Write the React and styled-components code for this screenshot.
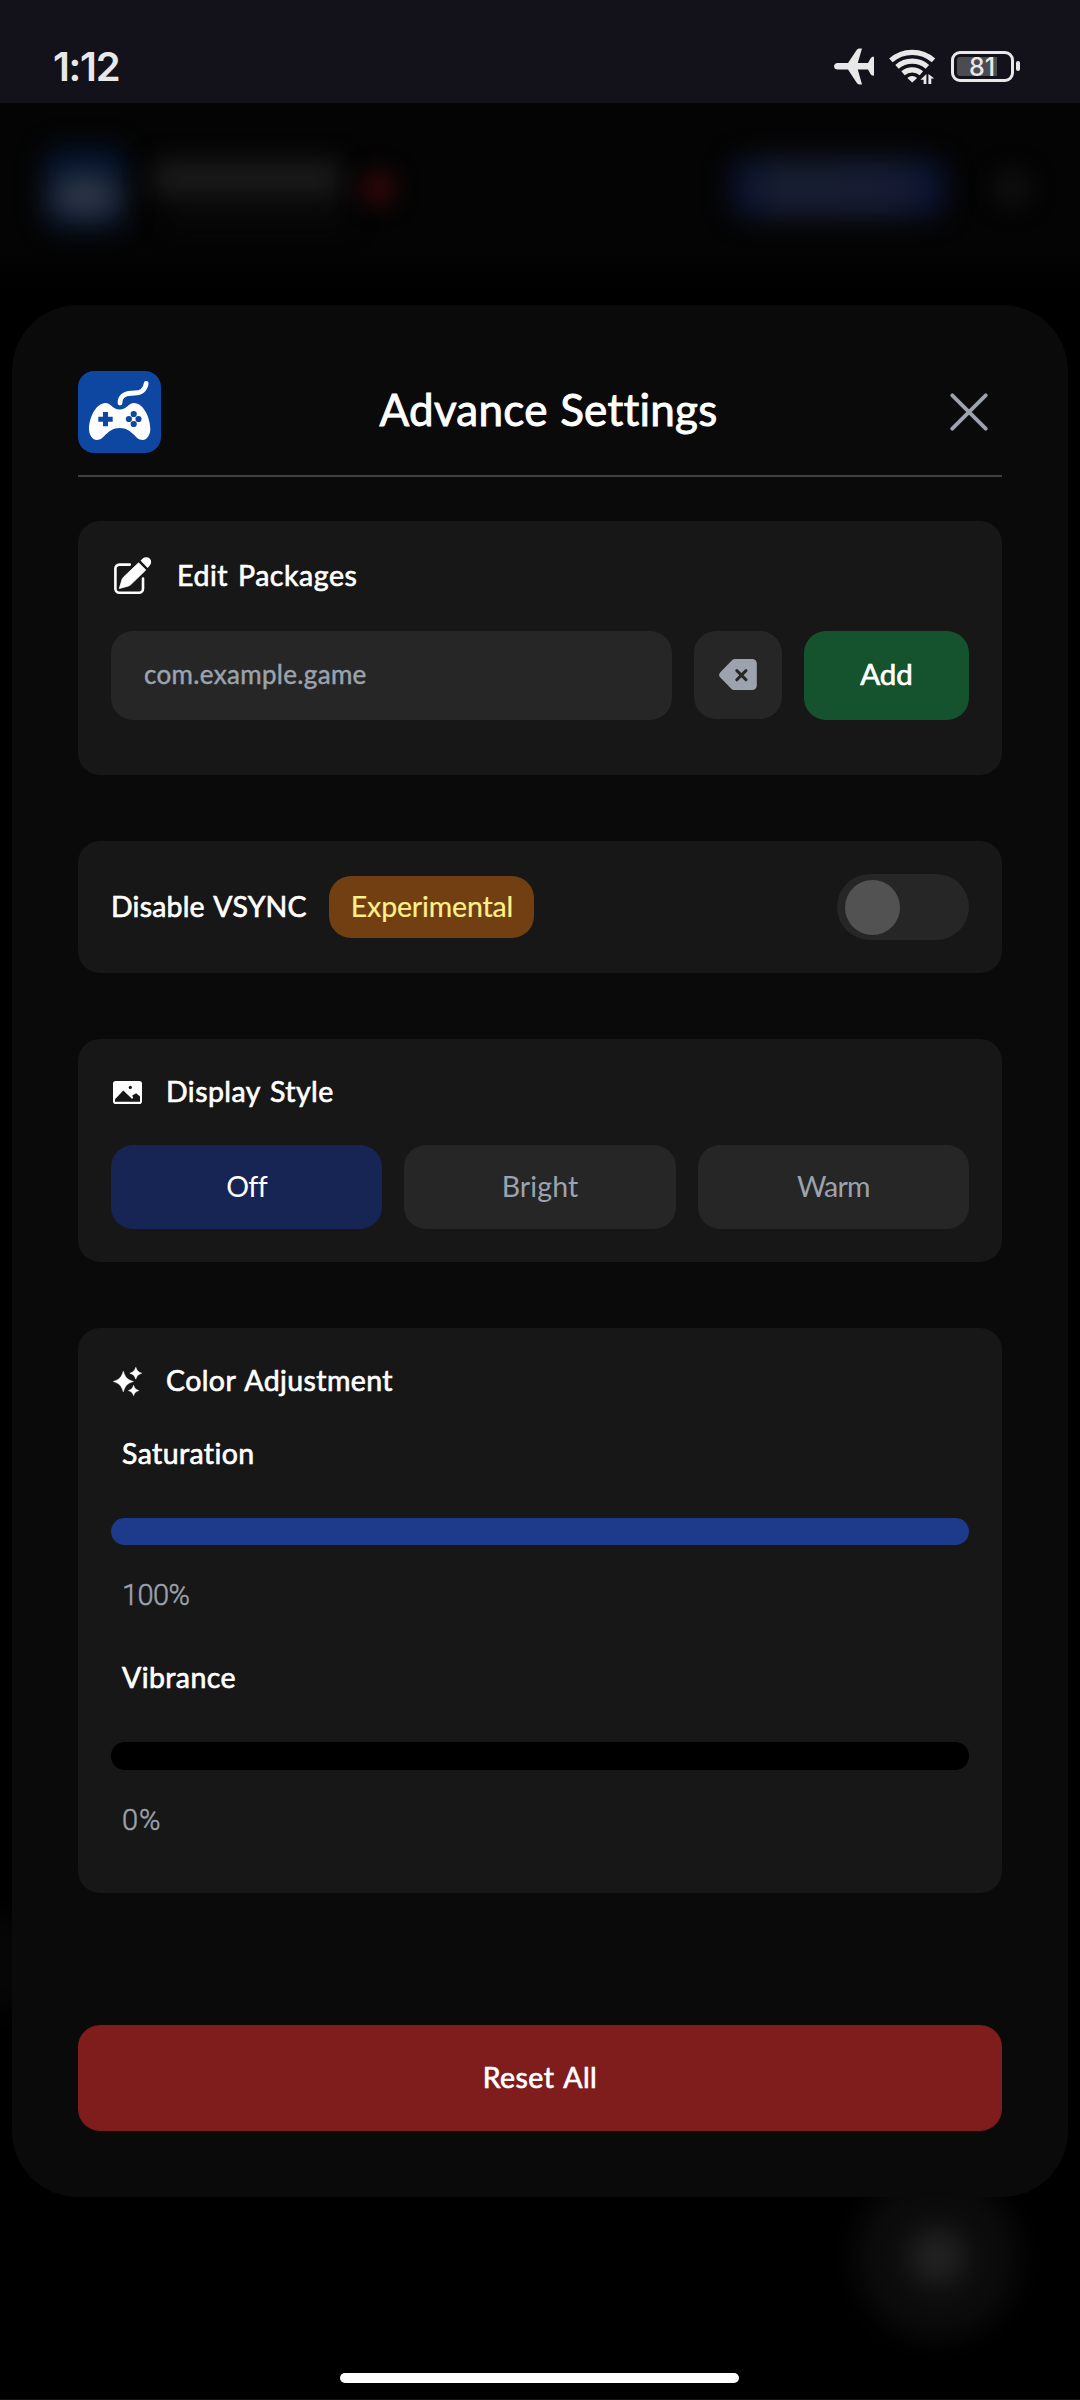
import React, { useState } from "react";
import styled, { createGlobalStyle } from "styled-components";

const GlobalStyle = createGlobalStyle`
  *, *::before, *::after { box-sizing: border-box; }
  body {
    margin: 0;
    background: #000;
    font-family: Lato, "Open Sans", sans-serif;
    -webkit-font-smoothing: antialiased;
  }
  button, input { font: inherit; border: 0; padding: 0; margin: 0; }
`;

const Screen = styled.div`
  width: 1080px;
  height: 2400px;
  display: flex;
  flex-direction: column;
  background: #000;
  border-bottom: 1px solid #13111a;
  overflow: hidden;
`;

/* ---------- status bar ---------- */

const StatusBar = styled.header`
  height: 103px;
  flex: none;
  display: flex;
  justify-content: space-between;
  padding: 44px 60px 0 53px;
  background: #13111a;
  color: #e8e8e8;
`;

const Clock = styled.time`
  font: 600 40px/46px Inter, sans-serif;
  letter-spacing: -1.3px;
`;

const StatusIcons = styled.div`
  display: flex;
  align-items: center;
  height: 44px;
  gap: 15px;
`;

const Battery = styled.div`
  display: flex;
  align-items: center;
  gap: 2px;
`;

const BatteryCase = styled.div`
  width: 63px;
  height: 31px;
  padding: 3px;
  border: 3px solid #e8e8e8;
  border-radius: 9px;
`;

const BatteryLevel = styled.div`
  width: 40px;
  height: 19px;
  border-radius: 3px 0 0 3px;
  background: #4c4b51;
  padding-left: 12px;
  font: 500 25px/20px Inter, sans-serif;
  white-space: nowrap;
`;

const BatteryNub = styled.div`
  width: 4px;
  height: 10px;
  border-radius: 2px;
  background: #e8e8e8;
`;

/* ---------- dimmed page behind the dialog ---------- */

const Stage = styled.main`
  position: relative;
  flex: 1;
  display: flex;
  flex-direction: column;
  padding: 202px 12px 0;
`;

const Backdrop = styled.div`
  position: absolute;
  inset: 0;
  overflow: hidden;
`;

const BackdropHeader = styled.div`
  height: 190px;
  display: flex;
  align-items: center;
  padding: 0 46px 20px 44px;
  background: linear-gradient(#040404 148px, #000 185px);
`;

const DimLogo = styled.div`
  width: 82px;
  height: 82px;
  border-radius: 16px;
  background: radial-gradient(ellipse 40px 24px at 50% 60%, #333c4b 20%, rgba(42, 50, 66, 0.8) 70%, transparent 130%), #04142e;
  filter: blur(13px);
`;

const DimTitle = styled.div`
  width: 190px;
  height: 34px;
  margin: -20px 0 0 26px;
  border-radius: 10px;
  background: #1b1b1b;
  box-shadow: 10px 34px 8px -4px #090909;
  filter: blur(13px);
`;

const DimDot = styled.div`
  width: 36px;
  height: 36px;
  margin-left: 18px;
  border-radius: 50%;
  background: #2f0709;
  filter: blur(11px);
`;

const DimAction = styled.div`
  width: 216px;
  height: 60px;
  margin-left: auto;
  border-radius: 16px;
  background: linear-gradient(90deg, #08112d, #181e31 25%, #151b32 75%, #08112d);
  filter: blur(13px);
`;

const DimMenu = styled.div`
  width: 36px;
  height: 36px;
  margin: 0 4px 0 48px;
  border-radius: 50%;
  background: #101010;
  filter: blur(12px);
`;

const FloatingAction = styled.div`
  position: absolute;
  left: 855px;
  top: 2072px;
  width: 164px;
  height: 164px;
  border-radius: 50%;
  background: radial-gradient(circle, #222 0 16%, #0b0b0b 32%);
  filter: blur(13px);
`;

const EdgeGlow = styled.div`
  position: absolute;
  left: -40px;
  top: 1815px;
  width: 70px;
  height: 90px;
  background: #060606;
  filter: blur(14px);
`;

/* ---------- dialog ---------- */

const Dialog = styled.section`
  position: relative;
  height: 1892px;
  padding: 66px;
  border-radius: 66px;
  background: #0a0a0a;
  color: #fff;
  display: flex;
  flex-direction: column;
`;

const DialogHeader = styled.div`
  height: 106px;
  flex: none;
  display: flex;
  justify-content: space-between;
  align-items: flex-start;
  border-bottom: 2px solid #404040;
`;

const Title = styled.h1`
  margin: 0;
  font-size: 44px;
  font-weight: 400;
  line-height: 77px;
  letter-spacing: 0.25px;
  word-spacing: 1px;
  font-variant-ligatures: none;
  -webkit-text-stroke: 0.9px #fff;
`;

const CloseButton = styled.button`
  width: 66px;
  height: 82px;
  display: grid;
  place-items: center;
  background: none;
  color: #9ca3af;
`;

const Sections = styled.div`
  display: flex;
  flex-direction: column;
  gap: 66px;
  margin-top: 44px;
`;

const Card = styled.section`
  display: flex;
  flex-direction: column;
  padding: 33px 33px ${(p) => p.$bottom || 33}px;
  border-radius: 22px;
  background: #171717;
`;

const CardHeading = styled.div`
  display: flex;
  align-items: center;
  gap: ${(p) => p.$gap || 22}px;
  height: ${(p) => p.$height || 40}px;
`;

const IconSlot = styled.span`
  display: grid;
  place-items: center;
  width: ${(p) => p.$size || 33}px;
  height: ${(p) => p.$size || 33}px;
`;

const Label = styled.span`
  padding-bottom: 2px;
  font-size: 28.5px;
  line-height: 38px;
  letter-spacing: ${(p) => p.$tracking || 0}px;
  word-spacing: 2px;
  font-variant-ligatures: none;
  white-space: nowrap;
  -webkit-text-stroke: 0.65px currentColor;
`;

const PackageRow = styled.div`
  display: flex;
  align-items: flex-start;
  gap: 22px;
  margin-top: 33px;
`;

const PackageInput = styled.input`
  flex: 1;
  min-width: 0;
  height: 89px;
  padding: 0 33px 3px;
  border-radius: 22px;
  background: #262626;
  color: #fff;
  font-size: 26px;
  letter-spacing: 0.33px;
  outline: 0;
  &::placeholder { color: #9ca3af; opacity: 1; -webkit-text-stroke: 0.45px #9ca3af; }
`;

const ClearButton = styled.button`
  width: 88px;
  height: 88px;
  border-radius: 22px;
  background: #262626;
  color: #9ca3af;
  display: grid;
  place-items: center;
`;

const AddButton = styled.button`
  width: 165px;
  height: 89px;
  border-radius: 22px;
  background: #14532d;
  color: #fff;
  font-size: 29.5px;
  padding-bottom: 4px;
  -webkit-text-stroke: 0.7px #fff;
`;

const ToggleRow = styled.div`
  display: flex;
  align-items: center;
  height: 66px;
`;

const Badge = styled.span`
  height: 62px;
  width: 205px;
  margin-left: auto;
  margin-right: 303px;
  padding-left: 1px;
  border-radius: 22px;
  background: #713f12;
  color: #fef08a;
  font-size: 28.5px;
  line-height: 60px;
  text-align: center;
  letter-spacing: -0.15px;
  -webkit-text-stroke: 0.2px #fef08a;
`;

const Switch = styled.button`
  flex: none;
  display: flex;
  align-items: center;
  justify-content: ${(p) => (p.$on ? "flex-end" : "flex-start")};
  width: 132px;
  height: 66px;
  padding: 0 8px;
  border-radius: 33px;
  background: ${(p) => (p.$on ? "#1e3a8a" : "#262626")};
`;

const Knob = styled.span`
  width: 55px;
  height: 55px;
  border-radius: 50%;
  background: #525252;
`;

const StyleOptions = styled.div`
  display: grid;
  grid-template-columns: repeat(3, 1fr);
  gap: 22px;
  margin-top: 33px;
`;

const StyleOption = styled.button`
  height: 84px;
  padding-bottom: 3px;
  border-radius: 22px;
  background: ${(p) => (p.$selected ? "#172554" : "#262626")};
  color: ${(p) => (p.$selected ? "#fff" : "#9ca3af")};
  font-size: 28.5px;
  letter-spacing: ${(p) => p.$tracking}px;
  font-variant-ligatures: none;
`;

const Adjustment = styled.div`
  display: flex;
  flex-direction: column;
  margin-top: ${(p) => p.$top}px;
`;

const AdjustmentText = styled.div`
  display: flex;
  height: 40px;
  padding-left: 11px;
`;

const Value = styled.span`
  font: 300 29px/40px Roboto, sans-serif;
  letter-spacing: ${(p) => p.$tracking}px;
  -webkit-text-stroke: 0.5px #9ca3af;
  color: #9ca3af;
`;

const Track = styled.div`
  height: ${(p) => p.$height}px;
  margin: 44px 0 30px;
  border-radius: 14px;
  background: #000;
  overflow: hidden;
`;

const Fill = styled.div`
  height: 100%;
  background: #1e3a8a;
`;

const ResetButton = styled.button`
  height: 106px;
  margin-top: auto;
  padding-bottom: 2px;
  border-radius: 22px;
  background: #7f1d1d;
  color: #fff;
  font-size: 28.5px;
  letter-spacing: 0.45px;
  word-spacing: 2px;
  -webkit-text-stroke: 0.65px #fff;
`;

const HomeIndicator = styled.div`
  width: 399px;
  height: 10px;
  margin: auto 329px 16px 328px;
  border-radius: 5px;
  background: #fff;
  position: relative;
`;

/* ---------- icons ---------- */

const Airplane = () => (
  <svg width="40" height="37" viewBox="0 0 40 37" fill="#e8e8e8">
    <path d="M0 18.300C0 16.300 1.500 15 3.600 15H14L22.500 2.200C23.300 1 24.300.4 25.500.4H28L23.800 15H34L36.500 10.500C37.200 9.300 38 8.800 40 8.800V27.800C38 27.800 37.200 27.300 36.500 26.100L34 21.600H23.800L28 36.400H25.500C24.300 36.400 23.300 35.600 22.500 34.400L14 21.600H3.600C1.500 21.600 0 20.300 0 18.300z" />
  </svg>
);

const Wifi = () => (
  <svg width="47" height="36" viewBox="0 0 47 36" fill="none" stroke="#e8e8e8" strokeWidth="5.200">
    <path d="M1.900 12.400a32 32 0 0 1 42.600 0" />
    <path d="M8 18.900a23 23 0 0 1 30.400 0" />
    <path d="M14 25.200a14.500 14.500 0 0 1 18.400 0" />
    <path d="M23.200 34.600l-4.900-4.700a7.300 7.300 0 0 1 9.800 0z" fill="#e8e8e8" stroke="none" />
    <path d="M37.400 26v10h-2.800v-4.200h-3.200zM39.400 36V26l5.900 4.600h-3v5.400z" fill="#e8e8e8" stroke="none" />
  </svg>
);

const Logo = () => (
  <svg width="83" height="82" viewBox="0 0 83 82">
    <rect width="83" height="82" rx="16" fill="#0d47a1" />
    <path d="M42 32C42 23.500 49 22 56.500 22C63.500 22 67.500 18 68.200 12.500" fill="none" stroke="#fff" strokeWidth="4.800" strokeLinecap="round" />
    <path d="M27.500 32C33 32 34.500 38.500 41.700 38.500S50.500 32 56 32C65 32 72.300 46 72.300 58C72.300 64 69 69 64.500 69C57 69 54.500 57 41.700 57S26.500 69 19 69C14.500 69 11 64 11 58C11 46 18.500 32 27.500 32z" fill="#fff" />
    <path d="M25 41h5v4.700h4.700v5H30v4.600h-5v-4.600h-4.700v-5H25z" fill="#0d47a1" />
    <g fill="#0d47a1">
      <circle cx="55.700" cy="43" r="3.100" />
      <circle cx="55.700" cy="53" r="3.100" />
      <circle cx="50.900" cy="48" r="3.100" />
      <circle cx="60.500" cy="48" r="3.100" />
    </g>
  </svg>
);

const CloseIcon = () => (
  <svg width="38" height="38" viewBox="0 0 38 38" stroke="currentColor" strokeWidth="3.800" strokeLinecap="round">
    <path d="M2.300 2.300l33.400 33.400M35.700 2.300L2.300 35.700" />
  </svg>
);

const EditIcon = () => (
  <svg width="40" height="40" viewBox="0 0 40 40">
    <path d="M16.800 8.600H6.400a4 4 0 0 0-4 4v20.200a4 4 0 0 0 4 4H26a4 4 0 0 0 4-4V22.500" fill="none" stroke="#fff" strokeWidth="2.600" strokeLinecap="round" />
    <path d="M6.300 32.500L9 23.600Q9.400 22.300 10.400 21.200L25.600 6.800L32.800 14L17.800 28.600Q16.800 29.600 15.500 30z" fill="#fff" stroke="#fff" strokeWidth="0.800" strokeLinejoin="round" />
    <path d="M27.600 4.800L29.700 2.600a4.900 4.900 0 0 1 7 7L34.700 11.900z" fill="#fff" />
  </svg>
);

const BackspaceIcon = () => (
  <svg width="38" height="32" viewBox="0 0 38 32">
    <path d="M13.500.8Q14.700 0 16 0h17.200A4.600 4.600 0 0 1 37.800 4.600v21.900a4.600 4.600 0 0 1-4.600 4.600H14.500Q13.500 31.100 12.800 30.300L1.100 18.200Q-.9 16 1.100 13.600z" fill="currentColor" />
    <path d="M17.800 11.600l9.200 9.200M27 11.600l-9.200 9.200" stroke="#262626" strokeWidth="3" strokeLinecap="round" />
  </svg>
);

const ImageIcon = () => (
  <svg width="29" height="23" viewBox="0 0 29 23">
    <rect width="29" height="23" rx="2.800" fill="#fff" />
    <path d="M2 20.800v-2.600l8.300-8.700 8.600 8.300 1.300-.8-1-2.500 4-2.300 3.800 3.400v5.200z" fill="#171717" />
    <circle cx="17.300" cy="6.400" r="1.600" fill="#171717" />
  </svg>
);

const SparklesIcon = () => (
  <svg width="29" height="29" viewBox="0 0 29 29" fill="#fff" stroke="#fff" strokeWidth="0.500" strokeLinejoin="round">
    <path d="M10.300 4.200C12.500 10.800 14 12.300 20.500 14.500C14 16.700 12.500 18.200 10.300 24.800C8.100 18.200 6.600 16.700.3 14.500C6.600 12.300 8.100 10.800 10.300 4.200z" />
    <path d="M22.800.3C24.200 4 25 4.800 28.700 6.200C25 7.600 24.200 8.400 22.800 12.200C21.400 8.400 20.600 7.600 16.800 6.200C20.600 4.800 21.400 4 22.800.3z" />
    <path d="M20.600 18.300C21.700 21.500 22.500 22.300 25.800 23.600C22.500 24.900 21.700 25.600 20.600 28.700C19.500 25.600 18.700 24.900 15.500 23.600C18.700 22.300 19.500 21.500 20.600 18.300z" />
  </svg>
);

/* ---------- page ---------- */

const STYLES = [
  { name: "Off", tracking: -0.6 },
  { name: "Bright", tracking: 0.1 },
  { name: "Warm", tracking: -0.8 },
];

function Slider({ name, value, tracking, valueTracking, top, height }) {
  return (
    <Adjustment $top={top}>
      <AdjustmentText>
        <Label $tracking={tracking}>{name}</Label>
      </AdjustmentText>
      <Track $height={height}>
        <Fill style={{ width: `${value}%` }} />
      </Track>
      <AdjustmentText>
        <Value $tracking={valueTracking}>{value}%</Value>
      </AdjustmentText>
    </Adjustment>
  );
}

export default function App() {
  const [pkg, setPkg] = useState("");
  const [vsyncOff, setVsyncOff] = useState(false);
  const [display, setDisplay] = useState("Off");

  return (
    <Screen>
      <GlobalStyle />
      <StatusBar>
        <Clock>1:12</Clock>
        <StatusIcons>
          <Airplane />
          <Wifi />
          <Battery>
            <BatteryCase>
              <BatteryLevel>81</BatteryLevel>
            </BatteryCase>
            <BatteryNub />
          </Battery>
        </StatusIcons>
      </StatusBar>

      <Stage>
        <Backdrop>
          <BackdropHeader>
            <DimLogo />
            <DimTitle />
            <DimDot />
            <DimAction />
            <DimMenu />
          </BackdropHeader>
          <EdgeGlow />
          <FloatingAction />
        </Backdrop>

        <Dialog>
          <DialogHeader>
            <Logo />
            <Title>Advance Settings</Title>
            <CloseButton aria-label="Close">
              <CloseIcon />
            </CloseButton>
          </DialogHeader>

          <Sections>
            <Card $bottom={55}>
              <CardHeading $height={44}>
                <IconSlot $size={44}>
                  <EditIcon />
                </IconSlot>
                <Label $tracking={0.55}>Edit Packages</Label>
              </CardHeading>
              <PackageRow>
                <PackageInput
                  placeholder="com.example.game"
                  value={pkg}
                  onChange={(e) => setPkg(e.target.value)}
                />
                <ClearButton aria-label="Clear" onClick={() => setPkg("")}>
                  <BackspaceIcon />
                </ClearButton>
                <AddButton>Add</AddButton>
              </PackageRow>
            </Card>

            <Card>
              <ToggleRow>
                <Label $tracking={0.2}>Disable VSYNC</Label>
                <Badge>Experimental</Badge>
                <Switch $on={vsyncOff} aria-label="Disable VSYNC" onClick={() => setVsyncOff(!vsyncOff)}>
                  <Knob />
                </Switch>
              </ToggleRow>
            </Card>

            <Card>
              <CardHeading>
                <IconSlot>
                  <ImageIcon />
                </IconSlot>
                <Label $tracking={0.45}>Display Style</Label>
              </CardHeading>
              <StyleOptions>
                {STYLES.map((s) => (
                  <StyleOption
                    key={s.name}
                    $selected={display === s.name}
                    $tracking={s.tracking}
                    onClick={() => setDisplay(s.name)}
                  >
                    {s.name}
                  </StyleOption>
                ))}
              </StyleOptions>
            </Card>

            <Card $bottom={53}>
              <CardHeading>
                <IconSlot>
                  <SparklesIcon />
                </IconSlot>
                <Label $tracking={0.4}>Color Adjustment</Label>
              </CardHeading>
              <Slider name="Saturation" value={100} tracking={0.4} valueTracking={-0.6} top={33} height={27} />
              <Slider name="Vibrance" value={0} tracking={0.4} valueTracking={1} top={43} height={28} />
            </Card>
          </Sections>

          <ResetButton>Reset All</ResetButton>
        </Dialog>

        <HomeIndicator />
      </Stage>
    </Screen>
  );
}
